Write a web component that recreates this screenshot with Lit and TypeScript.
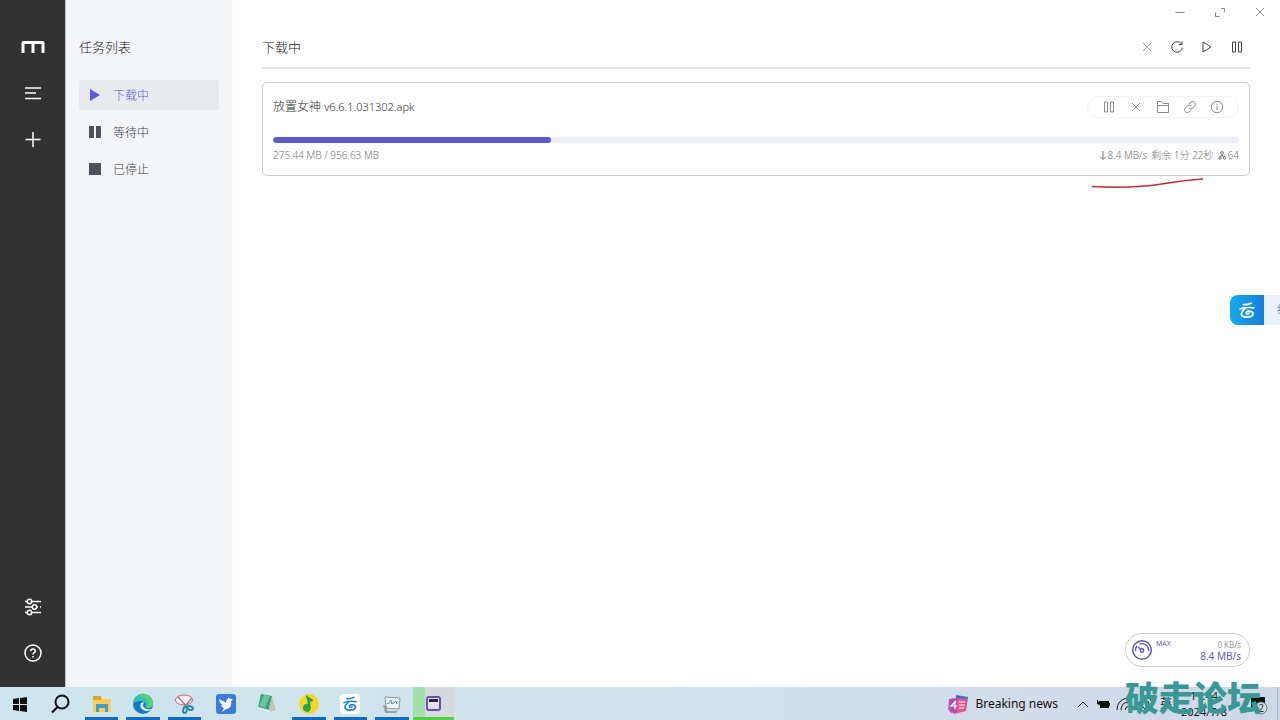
import { LitElement, html, css, svg, nothing } from "lit";
import { customElement, state } from "lit/decorators.js";
import { classMap } from "lit/directives/class-map.js";
import { styleMap } from "lit/directives/style-map.js";

const icon = (body: unknown, size = 18, box = 18) =>
  html`<svg width=${size} height=${size} viewBox="0 0 ${box} ${box}" aria-hidden="true">${body}</svg>`;

const pauseOutline = icon(svg`<path d="M4.500 4h3v10h-3zM10.500 4h3v10h-3z" class="line"/>`);
const cross = icon(svg`<path d="M5 5l8 8M13 5l-8 8" class="line"/>`);
const refresh = icon(svg`<path d="M13.400 6A5.300 5.300 0 1 0 14.300 9.600M14 3.400v3.200h-3.400" class="line"/>`);
const playOutline = icon(svg`<path d="M5 4l8 5-8 5z" class="line"/>`);
const folder = icon(svg`<path d="M3.500 14.500v-11h4l1.500 2h5.500v9zM3.500 7.500h11" class="line"/>`);
const link = icon(svg`<path d="M7.600 6.200l2.300-2a2.600 2.600 0 0 1 3.800 3.600l-2.200 2.400a2.500 2.500 0 0 1-3.600-.2M10.400 11.800l-2.300 2a2.600 2.600 0 0 1-3.800-3.600l2.200-2.400a2.500 2.500 0 0 1 3.600.2" class="line"/>`);
const info = icon(svg`<circle cx="9" cy="9" r="5.700" class="line"/><path d="M9 8v4M9 5.800v1.200" class="line"/>`);

const cloudGlyph = svg`<g fill="none" stroke="currentColor" stroke-width="2.400" stroke-linecap="round"><path d="M9 6.500Q15 7 20 4.500"/><path d="M4.500 12.500Q14 9.500 23.500 11"/><path d="M11 12Q6 17 6 20Q7 24 14 24Q22 24 22.500 19.500Q22 15.500 17 15.500Q12 16 13 19Q15 20.500 17 18.800"/></g>`;

const apps = [
  { name: "File Explorer", state: "open", art: svg`<path d="M1 3h8l2 2h8v13H1z" fill="#f7ce5b"/><path d="M1 2h8v4H1z" fill="#dda530"/><path d="M4 18v-8h12v8h-3v-4H7v4z" fill="#4b9ac4"/>` },
  { name: "Edge", state: "open", art: svg`<circle cx="10" cy="10" r="10" fill="#1878c8"/><path d="M0 10A10 10 0 0 1 20 9c0 5-5 6-8 4 2-3 0-6-4-6-4 0-7 1-8 3z" fill="#35c1b4"/><path d="M10 0a10 10 0 0 1 10 9c0 4-3 5-6 5 4-6-1-11-8-12z" fill="#5fd06c"/><path d="M8 9c-2 4 1 8 6 8 2 0 4-1 5-2-5 1-9-1-9-4 0-1 1-2 1-3z" fill="#d8edf5"/>` },
  { name: "Snip", state: "open", art: svg`<ellipse cx="9" cy="6" rx="8.500" ry="5" fill="#f6eef0" stroke="#c4626c"/><path d="M3 3l10 11M17 4l-8 9" stroke="#8a7f86" stroke-width="1.300"/><ellipse cx="10" cy="16" rx="1.800" ry="3" transform="rotate(15 10 16)" fill="none" stroke="#2886ad" stroke-width="2"/><ellipse cx="15" cy="14" rx="3" ry="1.800" transform="rotate(20 15 14)" fill="none" stroke="#2886ad" stroke-width="2"/>` },
  { name: "Bird", state: "", art: svg`<rect width="20" height="20" rx="3" fill="#3d7bdb"/><path d="M3 5c3 2 5 2 7 4 0-3 2-5 3-6 0 2 2 2 4 2l-2 2c1 4-1 8-5 8l-4 3 2-4C6 13 5 12 5 11c1 1 2 0 2 0C5 10 3 8 3 5z" fill="#fff"/>` },
  { name: "Notes", state: "", art: svg`<path d="M5 1l10 2-3 15-12-4z" fill="#f2f5ef"/><path d="M4 0l11 2-3 14-11-3z" fill="#36a37a"/><path d="M7 1l6 1-5 12-6-2z" fill="#6cc4a2"/><path d="M15 3l4 13-6 2-1-4z" fill="#c4c5af"/>` },
  { name: "Music", state: "open", art: svg`<circle cx="10" cy="10" r="10" fill="#f9d423"/><path d="M8 1c1 3 6 3 6 6l-3 1 1 6a4 4 0 1 1-3-4L7 2z" fill="#1ba45a"/>` },
  { name: "Cloud", state: "open", art: svg`<rect width="20" height="20" rx="3" fill="#fff"/><g transform="translate(1 .5) scale(.65)" color="#1b7fc4">${cloudGlyph}</g>` },
  { name: "Monitor", state: "open", art: svg`<path d="M3 3l15 1-1 11-13-1z" fill="#eef6fa" stroke="#8c9499"/><path d="M5 10l2-1 2-3 1 4 2-1 2-2 1 3" fill="none" stroke="#4b9bcb"/><path d="M1 11l4 1v5l11 0-2 2H3z" fill="#9ba1a3"/>` },
  { name: "Motrix", state: "progress", art: svg`<rect x="4" y="3" width="13" height="13" rx="2" fill="#e4def2" stroke="#6c4fa8" stroke-width="2"/><path d="M6 5h9v3H6z" fill="#2c2438"/>` },
];

@customElement("app-root")
export class AppRoot extends LitElement {
  static styles = css`
    :host {
      display: flex;
      flex-direction: column;
      min-height: 100vh;
      position: relative;
      overflow: hidden;
      background: #fff;
      color: #202123;
      font-family: "Noto Sans", "Noto Sans CJK SC", sans-serif;
      font-size: 12px;
      line-height: 16px;
      font-weight: 300;
    }
    * { box-sizing: border-box; }
    svg { display: block; overflow: visible; }
    button { border: 0; padding: 0; background: none; color: inherit; font: inherit; display: grid; place-items: center; }
    a { color: inherit; text-decoration: none; }
    h1, h2, h3 { margin: 0; font-size: 12px; font-weight: 300; }
    .line { fill: none; stroke: currentColor; stroke-width: 1; }
    .window { flex: 1; display: flex; position: relative; }
    .rail { width: 66px; background: #323232; border-right: 1px solid #c4c6c8; color: #fff; display: flex; flex-direction: column; align-items: center; justify-content: space-between; padding: 24px 0 11px; }
    .group { display: flex; flex-direction: column; }
    .rail button { width: 46px; height: 46px; }
    .rail .line { stroke-width: 1.5; }
    .nav { width: 166px; background: #f3f5f8; padding: 36px 13px; }
    .nav h2 { font-size: 13px; line-height: 22px; }
    .list { display: flex; flex-direction: column; gap: 7px; margin-top: 22px; }
    .item { height: 30px; display: flex; align-items: center; gap: 9px; padding-left: 7px; color: #3d414a; border-radius: 2px; }
    .item span { padding-top: 1px; }
    .item svg { color: #4d515a; }
    .item.active, .item.active svg { background: #e9eaee; color: #5b5be0; }
    .main { flex: 1; min-width: 0; display: flex; flex-direction: column; }
    .controls { display: flex; justify-content: flex-end; height: 24px; color: #888; }
    .controls button { width: 40px; }
    .content { padding: 0 30px; }
    .head { display: flex; align-items: center; justify-content: space-between; height: 45px; padding-top: 2px; border-bottom: 2px solid #e6e6e9; }
    .head h1 { font-size: 13px; line-height: 20px; }
    .tools { display: flex; gap: 12px; padding-right: 4px; color: #3d4148; }
    .tools .dim { color: #a4a4a4; }
    .card { margin-top: 13px; border: 1px solid #cdcdcd; border-radius: 5px; padding: 13px 10px 12px; }
    .top { display: flex; justify-content: space-between; align-items: center; height: 22px; color: #303030; }
    .version { font-size: 11px; font-weight: 300; }
    .actions { display: flex; align-items: center; gap: 9px; height: 22px; padding: 0 12px; border: 1px solid #f3f3f3; border-radius: 11px; color: #8b8b8b; }
    .bar { margin-top: 19px; height: 6px; border-radius: 3px; background: #ebeef5; overflow: hidden; }
    .fill { height: 100%; border-radius: 3px; background: #5b5bce; }
    .meta { display: flex; justify-content: space-between; margin-top: 4px; font-size: 10px; color: #757575; }
    .stats { display: flex; gap: 4px; align-items: center; }
    .peers, .down { display: flex; align-items: center; gap: 1px; }
    .speed { position: absolute; right: 30px; bottom: 20px; width: 125px; height: 34px; border: 1px solid #ccc; border-radius: 17px; background: #fff; display: flex; padding: 6px 8px 4px 6px; color: #5b5bb8; }
    .max { font-size: 7px; line-height: 8px; margin-left: 4px; font-weight: 400; }
    .rates { margin-left: auto; text-align: right; font-size: 10px; line-height: 12px; font-weight: 400; }
    .rates .up { color: #999; font-size: 8px; line-height: 10px; }
    .mark { position: absolute; left: 1092px; top: 178px; color: #c32a2a; }
    .cloud { position: absolute; right: 0; top: 295px; width: 50px; height: 30px; border-radius: 8px 0 0 8px; background: #eaf3fc; display: flex; align-items: center; overflow: hidden; color: #217dcb; white-space: nowrap; }
    .badge { width: 34px; height: 30px; flex: none; display: grid; place-items: center; color: #fff; background: linear-gradient(90deg, #16a9ea, #1780dc); }
    .cloud .label { margin-left: 13px; }
    .taskbar { position: relative; height: 33px; display: flex; background: linear-gradient(90deg, #cee5ee, #d0e3eb 45%, #d3dcea 80%, #cdd7e8); color: #111; font-weight: 400; }
    .sys { width: 40px; height: 33px; }
    .apps { display: grid; grid-template-columns: repeat(9, 1fr); width: 373px; margin-left: 1px; }
    .app { height: 33px; position: relative; }
    .app.open::after { content: ""; position: absolute; left: 4px; right: 4px; bottom: 0; height: 3px; background: #1269bd; }
    .app.progress { background: linear-gradient(90deg, #a5dfac 12px, #d5dadf 12px); border-bottom: 3px solid #55ce45; }
    .app.progress svg { margin-top: 3px; }
    .tray { margin-left: auto; display: flex; align-items: center; }
    .news { display: flex; align-items: center; gap: 7px; margin-right: 20px; }
    .status { display: flex; align-items: center; gap: 6px; }
    .clock { width: 64px; text-align: center; font-size: 11px; line-height: 16px; }
    .notice { width: 42px; height: 33px; padding-left: 2px; border-right: 1px solid #aab4c4; margin-right: 2px; }
    .watermark { position: absolute; right: 19px; bottom: 6px; color: #379896; font: 900 34px/34px "Noto Sans CJK SC", sans-serif; white-space: nowrap; }
  `;

  @state() private selected = 0;
  private done = 275.44;
  private total = 956.63;

  private nav = [
    { label: "下载中", art: svg`<path d="M4 3l10 6-10 6z" fill="currentColor"/>` },
    { label: "等待中", art: svg`<path d="M3 3h5v12H3zM10 3h5v12h-5z" fill="currentColor"/>` },
    { label: "已停止", art: svg`<path d="M3 3h12v12H3z" fill="currentColor"/>` },
  ];

  render() {
    return html`
      <div class="window">
        <aside class="rail">
          <div class="group">
            <button aria-label="Motrix">${icon(svg`<path d="M2 18V8q0-.5.500-.5h19q.5 0 .5.500v10M12 7.500V18" fill="none" stroke="currentColor" stroke-width="3"/>`, 24, 24)}</button>
            <button aria-label="任务列表">${icon(svg`<path d="M1 4h16M1 9h11M1 14.500h16" class="line"/>`)}</button>
            <button aria-label="添加任务">${icon(svg`<path d="M1.500 9.500h15M9 2v15" class="line"/>`)}</button>
          </div>
          <div class="group">
            <button aria-label="设置">${icon(svg`<path d="M1 3.500h2M8 3.500h9M1 9h7M13 9h1M16 9h1M1 14.500h2M8 14.500h9" class="line"/><circle cx="5.500" cy="3.500" r="2.200" class="line"/><circle cx="10.500" cy="9" r="2.200" class="line"/><circle cx="5.500" cy="14.500" r="2.200" class="line"/>`)}</button>
            <button aria-label="帮助">${icon(svg`<circle cx="9" cy="9" r="8" class="line"/><path d="M6.700 7.200Q6.900 5 9 5t2.300 2q0 1.200-1.300 1.900-1 .6-1 1.600M9 12v1.500" class="line"/>`)}</button>
          </div>
        </aside>
        <nav class="nav">
          <h2>任务列表</h2>
          <div class="list">
            ${this.nav.map((n, i) => html`<a href="#" class=${classMap({ item: true, active: i === this.selected })}
              @click=${(e: Event) => { e.preventDefault(); this.selected = i; }}>${icon(n.art)}<span>${n.label}</span></a>`)}
          </div>
        </nav>
        <main class="main">
          <div class="controls">
            <button aria-label="最小化">${icon(svg`<path d="M4.500 9.500h9" class="line"/>`)}</button>
            <button aria-label="最大化">${icon(svg`<path d="M10 5.500h3.500V9M4.500 9.500v4H8.500" class="line"/>`)}</button>
            <button aria-label="关闭">${cross}</button>
          </div>
          <div class="content">
            <header class="head">
              <h1>下载中</h1>
              <div class="tools">
                <button class="dim" aria-label="删除">${cross}</button>
                <button aria-label="刷新">${refresh}</button>
                <button aria-label="全部继续">${playOutline}</button>
                <button aria-label="全部暂停">${pauseOutline}</button>
              </div>
            </header>
            <article class="card">
              <div class="top">
                <h3>放置女神 <span class="version">v6.6.1.031302.apk</span></h3>
                <div class="actions">
                  <button aria-label="暂停">${pauseOutline}</button>
                  <button aria-label="删除">${cross}</button>
                  <button aria-label="打开文件夹">${folder}</button>
                  <button aria-label="复制链接">${link}</button>
                  <button aria-label="详情">${info}</button>
                </div>
              </div>
              <div class="bar"><div class="fill" style=${styleMap({ width: `${(this.done / this.total) * 100}%` })}></div></div>
              <div class="meta">
                <span>${this.done} MB / ${this.total} MB</span>
                <div class="stats">
                  <span class="down">${icon(svg`<path d="M4 0v8M1 5.500l3 3 3-3" class="line"/>`, 8, 8)}8.4 MB/s</span>
                  <span>剩余 1分 22秒</span>
                  <span class="peers">${icon(svg`<circle cx="4" cy="2" r="1.400" class="line"/><circle cx="2" cy="7" r="1.200" class="line"/><circle cx="6.500" cy="7" r="1.200" class="line"/><path d="M4 3.500v1.500H2v1M4 5h2.500v1" class="line"/>`, 9, 9)}64</span>
                </div>
              </div>
            </article>
          </div>
        </main>
        <div class="speed">
          ${icon(svg`<circle cx="10" cy="10" r="9.300" fill="none" stroke="currentColor" stroke-width="1.500"/><path d="M3.500 11a6.500 6.500 0 0 1 1.500-5M7.500 4.200A6.500 6.500 0 0 1 16.500 11M6 7l2.800 2.400" fill="none" stroke="currentColor" stroke-width="1.400"/><circle cx="10" cy="10.500" r="1.700" fill="none" stroke="currentColor" stroke-width="1.400"/>`, 20, 20)}
          <span class="max">MAX</span>
          <div class="rates"><div class="up">0 KB/s</div><div>8.4 MB/s</div></div>
        </div>
      </div>
      <svg class="mark" width="112" height="11" viewBox="0 0 112 11" aria-hidden="true"><path d="M0 8.500Q40 11 73 5.500Q94 2 111 1" fill="none" stroke="currentColor" stroke-width="1.600"/></svg>
      <div class="cloud"><span class="badge">${icon(cloudGlyph, 20, 28)}</span><span class="label">缩</span></div>
      <footer class="taskbar">
        <button class="sys" aria-label="Start">${icon(svg`<path d="M2 4l6-1v6H2zM9 3l7-1v7H9zM2 10h6v6l-6-1zM9 10h7v7l-7-1z" fill="currentColor"/>`)}</button>
        <button class="sys" aria-label="Search">${icon(svg`<circle cx="11" cy="7" r="6.500" fill="none" stroke="currentColor" stroke-width="2"/><path d="M6.500 12L1 17.500" stroke="currentColor" stroke-width="2.200"/>`)}</button>
        <div class="apps">
          ${apps.map((a) => html`<button class="app ${a.state || nothing}" aria-label=${a.name}>${icon(a.art, 20, 20)}</button>`)}
        </div>
        <div class="tray">
          <div class="news">
            ${icon(svg`<path d="M8 1l12 2-2 13-11-2z" fill="#3d6bc4"/><path d="M1 5l6-1 12 1-1 12-12 3-4-4z" fill="#e8558f"/><path d="M1 6q0-1 1-1h7v13l-6 1-3-4z" fill="#a34cc4" opacity=".8"/><path d="M8 7L3 12h6M7 7v8M11 8h6M11 11h6M11 14h5" stroke="#fff" stroke-width="1.200" fill="none"/>`, 20, 20)}
            <span>Breaking news</span>
          </div>
          <div class="status">
            ${icon(svg`<path d="M0 9l5-5 5 5" class="line"/>`, 12, 12)}
            ${icon(svg`<path d="M3 4h10v7H4V8L1 7V3h1v2z" fill="currentColor"/><path d="M13 6h1v3h-1z" fill="currentColor"/>`, 14, 14)}
            ${icon(svg`<path d="M1 14Q1 4 11 2M5 14Q5 7 12 6M9 14Q9 11 13 10" class="line"/>`, 16, 16)}
            ${icon(svg`<path d="M1 6h3l4-4v12l-4-4H1zM10 5q2 3 0 6M12 3q4 5 0 10" class="line"/>`, 16, 16)}
            <span>英</span>
          </div>
          <div class="clock"><div>11:44</div><div>2024/7/8</div></div>
          <button class="notice" aria-label="Notifications">${icon(svg`<path d="M2 2h14v10H8l-3 3v-3H2z" fill="currentColor"/><circle cx="12" cy="13" r="6" fill="#d5dbe5" stroke="#777"/><text x="12" y="17" font-size="10" text-anchor="middle" fill="#333">2</text>`)}</button>
        </div>
        <div class="watermark">破走论坛</div>
      </footer>
    `;
  }
}
